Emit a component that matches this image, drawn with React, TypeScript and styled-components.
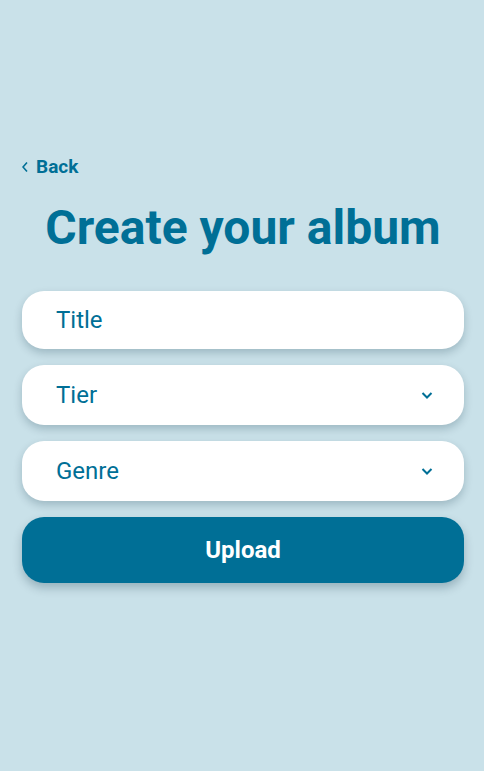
import React from "react";
import styled, { createGlobalStyle } from "styled-components";

const Global = createGlobalStyle`
  html, body { margin: 0; padding: 0; background: #c9e1e9; }
  body { font-family: Roboto, "Noto Sans", sans-serif; }
  * { box-sizing: border-box; }
`;

const Page = styled.div`
  min-height: 771px;
  background: #c9e1e9;
  padding: 154px 20px 0 22px;
  display: flex;
  flex-direction: column;
`;

const BackLink = styled.button`
  display: flex;
  align-items: center;
  gap: 8px;
  background: none;
  border: none;
  padding: 0;
  color: #006f96;
  font-family: Roboto, sans-serif;
  font-weight: 700;
  font-size: 19px;
  line-height: 26px;
  align-self: flex-start;
  margin-left: 0;
  cursor: pointer;
`;

const Heading = styled.h1`
  margin: 19px 0 0;
  text-align: center;
  color: #006f96;
  font-family: Roboto, sans-serif;
  font-weight: 700;
  font-size: 48px;
  line-height: 58px;
`;

const Form = styled.div`
  display: flex;
  flex-direction: column;
  gap: 16px;
  margin-top: 34px;
`;

const Field = styled.div<{ $h: number }>`
  height: ${(p) => p.$h}px;
  background: #ffffff;
  border-radius: 22px;
  box-shadow: 0 4px 8px rgba(0, 40, 60, 0.22);
  display: flex;
  align-items: center;
  justify-content: space-between;
  padding: 0 30px 0 34px;
  color: #006f96;
  font-size: 24px;
  font-family: Roboto, sans-serif;
`;

const Chevron = () => (
  <svg width="14" height="10" viewBox="0 0 14 10">
    <path d="M2.5 3 L7 7.5 L11.5 3" fill="none" stroke="#006f96" strokeWidth="2" />
  </svg>
);

const UploadButton = styled.button`
  height: 66px;
  border: none;
  border-radius: 22px;
  background: #006f96;
  color: #ffffff;
  font-family: Roboto, sans-serif;
  font-weight: 700;
  font-size: 24px;
  box-shadow: 0 5px 10px rgba(0, 40, 60, 0.25);
  cursor: pointer;
`;

export default function App() {
  return (
    <>
      <Global />
      <Page>
        <BackLink>
          <svg width="6" height="12" viewBox="0 0 6 12">
            <path d="M5 1.5 L1 6 L5 10.5" fill="none" stroke="#006f96" strokeWidth="1.6" />
          </svg>
          Back
        </BackLink>
        <Heading>Create your album</Heading>
        <Form>
          <Field $h={58}>Title</Field>
          <Field $h={60}>
            Tier
            <Chevron />
          </Field>
          <Field $h={60}>
            Genre
            <Chevron />
          </Field>
          <UploadButton>Upload</UploadButton>
        </Form>
      </Page>
    </>
  );
}
